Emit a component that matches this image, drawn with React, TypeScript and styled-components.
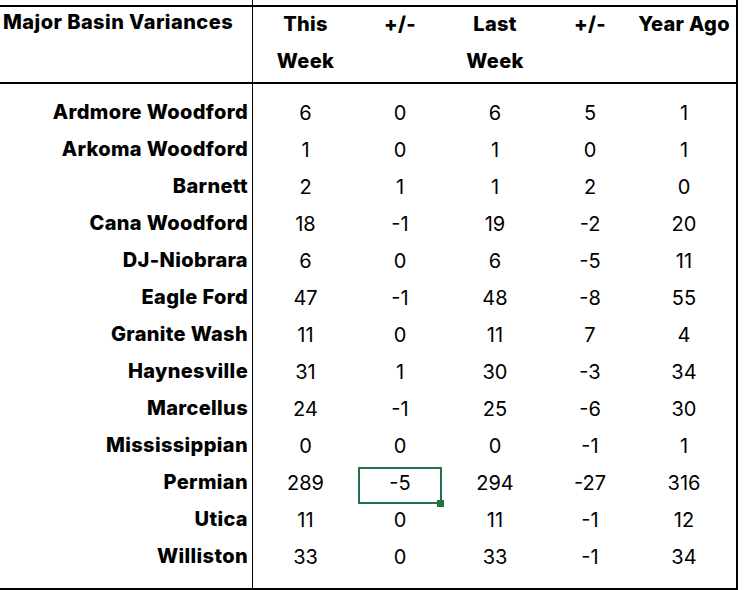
import React from "react";
import styled, { createGlobalStyle } from "styled-components";

const Global = createGlobalStyle`
  html, body { margin: 0; padding: 0; background: #ffffff; }
  body { font-family: "Inter", "Liberation Sans", sans-serif; color: #000; }
`;

const COLS = "253px 105px 84px 106px 84px 104px";

const Sheet = styled.div`
  width: 738px;
  height: 590px;
  box-sizing: border-box;
  border-right: 2px solid #000;
  border-bottom: 2px solid #000;
  display: flex;
  flex-direction: column;
`;

const Row = styled.div<{ $h: number }>`
  display: grid;
  grid-template-columns: ${COLS};
  height: ${(p) => p.$h}px;
  flex: none;
`;

const HeaderRow = styled.div`
  display: grid;
  grid-template-columns: ${COLS};
  border-top: 2px solid #000;
  border-bottom: 2px solid #000;
  height: 75px;
  flex: none;
`;

const Filler = styled.div`
  display: grid;
  grid-template-columns: ${COLS};
  flex: 1;
`;

const LabelCell = styled.div`
  border-right: 1px solid #000;
  box-sizing: border-box;
  text-align: right;
  padding-right: 4px;
  font-weight: 800;
  font-size: 20px;
  letter-spacing: 0.35px;
  line-height: 31px;
  white-space: nowrap;
`;

const TitleCell = styled(LabelCell)`
  text-align: left;
  padding-left: 3px;
  line-height: 30px;
  letter-spacing: 0.45px;
`;

const HeadCell = styled.div`
  text-align: center;
  font-weight: 800;
  font-size: 20px;
  letter-spacing: 0.3px;
  line-height: 37px;
  margin-top: -1px;
  white-space: nowrap;
`;

const Cell = styled.div<{ $selected?: boolean }>`
  position: relative;
  box-sizing: border-box;
  text-align: center;
  font-size: 20px;
  line-height: ${(p) => (p.$selected ? 29 : 33)}px;
  border: ${(p) => (p.$selected ? "2px solid #217346" : "none")};
`;

const Handle = styled.span`
  position: absolute;
  right: -4px;
  bottom: -5px;
  width: 7px;
  height: 7px;
  background: #217346;
`;

const rows: [string, string[]][] = [
  ["Ardmore Woodford", ["6", "0", "6", "5", "1"]],
  ["Arkoma Woodford", ["1", "0", "1", "0", "1"]],
  ["Barnett", ["2", "1", "1", "2", "0"]],
  ["Cana Woodford", ["18", "-1", "19", "-2", "20"]],
  ["DJ-Niobrara", ["6", "0", "6", "-5", "11"]],
  ["Eagle Ford", ["47", "-1", "48", "-8", "55"]],
  ["Granite Wash", ["11", "0", "11", "7", "4"]],
  ["Haynesville", ["31", "1", "30", "-3", "34"]],
  ["Marcellus", ["24", "-1", "25", "-6", "30"]],
  ["Mississippian", ["0", "0", "0", "-1", "1"]],
  ["Permian", ["289", "-5", "294", "-27", "316"]],
  ["Utica", ["11", "0", "11", "-1", "12"]],
  ["Williston", ["33", "0", "33", "-1", "34"]],
];

export default function App() {
  return (
    <>
      <Global />
      <Sheet>
        <Row $h={5}>
          <LabelCell />
        </Row>
        <HeaderRow>
          <TitleCell>Major Basin Variances</TitleCell>
          <HeadCell>
            This
            <br />
            Week
          </HeadCell>
          <HeadCell>+/-</HeadCell>
          <HeadCell>
            Last
            <br />
            Week
          </HeadCell>
          <HeadCell>+/-</HeadCell>
          <HeadCell>Year Ago</HeadCell>
        </HeaderRow>
        <Row $h={13}>
          <LabelCell />
        </Row>
        {rows.map(([name, vals]) => (
          <Row $h={37} key={name}>
            <LabelCell>{name}</LabelCell>
            {vals.map((v, i) => {
              const sel = name === "Permian" && i === 1;
              return (
                <Cell key={i} $selected={sel}>
                  {v}
                  {sel && <Handle />}
                </Cell>
              );
            })}
          </Row>
        ))}
        <Filler>
          <LabelCell />
        </Filler>
      </Sheet>
    </>
  );
}
